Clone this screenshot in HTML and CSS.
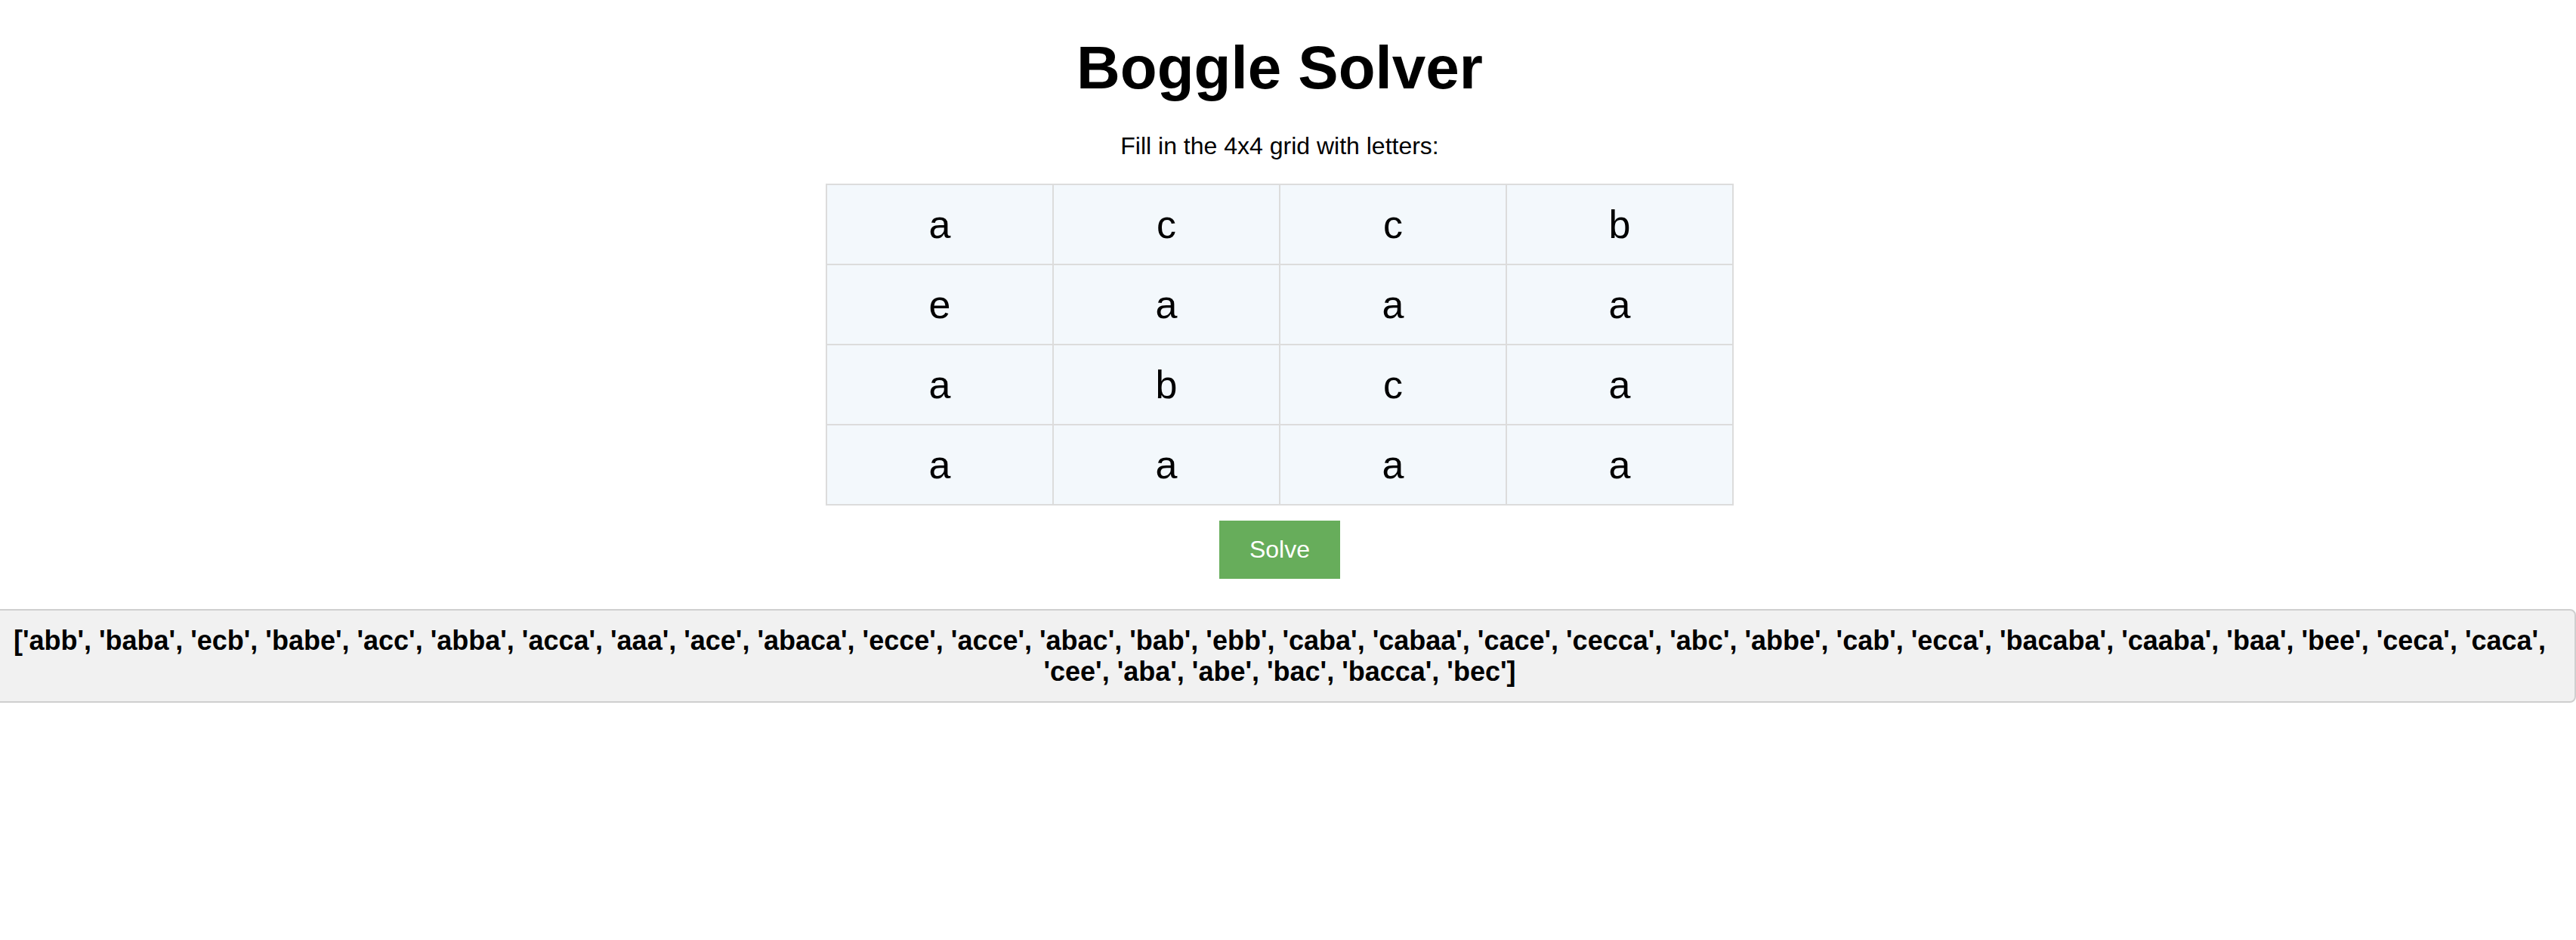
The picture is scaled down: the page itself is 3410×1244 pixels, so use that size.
FILE: index.html
```html
<!DOCTYPE html>
<html lang="en">
<head>
<meta charset="utf-8">
<title>Boggle Solver</title>
<link rel="stylesheet" href="styles.css">
</head>
<body>
<div class="page">
  <h1 class="title">Boggle Solver</h1>
  <p class="subtitle">Fill in the 4x4 grid with letters:</p>
  <table class="grid">
    <tr><td>a</td><td>c</td><td>c</td><td>b</td></tr>
    <tr><td>e</td><td>a</td><td>a</td><td>a</td></tr>
    <tr><td>a</td><td>b</td><td>c</td><td>a</td></tr>
    <tr><td>a</td><td>a</td><td>a</td><td>a</td></tr>
  </table>
  <button class="solve" type="button">Solve</button>
  <div class="result">['abb', 'baba', 'ecb', 'babe', 'acc', 'abba', 'acca', 'aaa', 'ace', 'abaca', 'ecce', 'acce', 'abac', 'bab', 'ebb', 'caba', 'cabaa', 'cace', 'cecca', 'abc', 'abbe', 'cab', 'ecca', 'bacaba', 'caaba', 'baa', 'bee', 'ceca', 'caca', 'cee', 'aba', 'abe', 'bac', 'bacca', 'bec']</div>
</div>
</body>
</html>
```
FILE: styles.css
```css
html, body {
  margin: 0;
  padding: 0;
  background: #ffffff;
}
body {
  font-family: "Liberation Sans", Arial, Helvetica, sans-serif;
  color: #000;
}
.page {
  width: calc(100% - 22px);
  display: flex;
  flex-direction: column;
  align-items: center;
}
.title {
  font-size: 80px;
  font-weight: bold;
  margin: 44px 0 0;
  line-height: normal;
}
.subtitle {
  font-size: 32px;
  margin: 39px 0 0;
}
.grid {
  margin-top: 31px;
  border-collapse: collapse;
  border: 2px solid #dcdcdc;
}
.grid td {
  width: 298px;
  height: 104px;
  padding: 0;
  border: 2px solid #dcdcdc;
  background: #f3f8fc;
  text-align: center;
  vertical-align: middle;
  font-size: 52px;
}
.solve {
  margin-top: 20px;
  width: 160px;
  height: 77px;
  background: #67ad5b;
  border: none;
  color: #fff;
  font-family: inherit;
  font-size: 32px;
}
.result {
  margin-top: 40px;
  width: 100%;
  padding: 19px 20px;
  border: 2px solid #cfcfcf;
  border-radius: 8px;
  background: #f1f1f1;
  font-size: 36px;
  font-weight: bold;
  text-align: center;
  line-height: 41px;
}
```
